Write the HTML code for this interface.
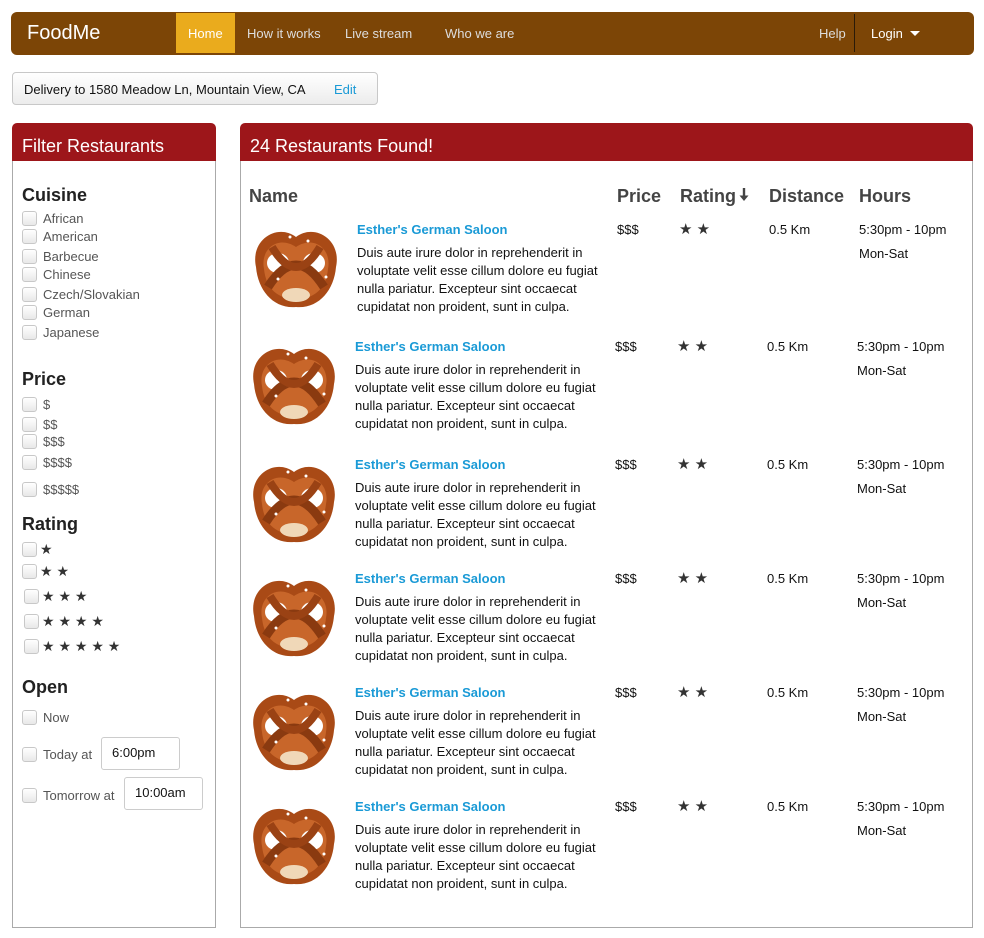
<!DOCTYPE html>
<html><head><meta charset="utf-8"><style>
*{margin:0;padding:0;box-sizing:border-box}
body{width:984px;height:938px;background:#fff;font-family:"Liberation Sans",sans-serif;position:relative;overflow:hidden;color:#222}
.a{position:absolute;white-space:nowrap}
.nav{left:11px;top:12px;width:963px;height:43px;background:#7c4506;border-radius:6px}
.nl{color:#ddd;font-size:13px;top:26px}
.cb{position:absolute;width:15px;height:15px;border:1px solid #c8c8c8;border-radius:3px;background:linear-gradient(#fff,#e8e8e8)}
.ft{font-size:13px;color:#555}
.h3{font-size:18px;font-weight:bold;color:#222}
.ph{background:#9d161a;color:#fff;font-size:18px;padding-left:10px;padding-top:8px;height:38px;line-height:30px;border-radius:5px 5px 0 0}
.panel{border:1px solid #aaa;border-top:none}
.th{font-size:18px;font-weight:bold;color:#444;top:186px}
.nm{color:#1a9ad6;font-weight:bold;font-size:13px}
.d{font-size:13px;line-height:18px;color:#111}
.c{font-size:13px;color:#111}
.in{position:absolute;border:1px solid #ccc;border-radius:3px;font-size:13px;color:#111;padding-left:10px;line-height:30px;background:#fff}
</style></head><body>
<svg width="0" height="0" style="position:absolute"><defs>
<g id="pz">
<path d="M8 48 C2 20 30 4 48 18 C66 4 94 20 88 48 C86 72 70 90 48 88 C26 90 10 72 8 48Z" fill="#a94a16"/>
<path d="M16 50 C12 30 30 16 48 28 C66 16 84 30 80 50 C78 70 66 80 48 80 C30 80 18 70 16 50Z" fill="#c8662a"/>
<ellipse cx="30" cy="44" rx="11" ry="10" fill="#fff"/>
<ellipse cx="66" cy="44" rx="11" ry="10" fill="#fff"/>
<ellipse cx="48" cy="76" rx="14" ry="7" fill="#f0d8b8"/>
<path d="M20 68 Q48 24 76 68" stroke="#8a3a10" stroke-width="9" fill="none"/>
<path d="M24 28 Q48 68 72 28" stroke="#9a4214" stroke-width="8" fill="none"/>
<circle cx="30" cy="60" r="1.5" fill="#fff"/><circle cx="60" cy="22" r="1.5" fill="#fff"/><circle cx="78" cy="58" r="1.5" fill="#fff"/><circle cx="42" cy="18" r="1.5" fill="#fff"/>
</g></defs></svg>

<div class="a nav"></div>
<div class="a" style="left:27px;top:22px;font-size:20px;color:#fff">FoodMe</div>
<div class="a" style="left:176px;top:13px;width:59px;height:40px;background:#eaab1d"></div>
<div class="a nl" style="left:188px;color:#fff">Home</div>
<div class="a nl" style="left:247px">How it works</div>
<div class="a nl" style="left:345px">Live stream</div>
<div class="a nl" style="left:445px">Who we are</div>
<div class="a nl" style="left:819px">Help</div>
<div class="a" style="left:854px;top:14px;width:1px;height:38px;background:#2a1a08"></div>
<div class="a nl" style="left:871px;color:#fff">Login</div>
<div class="a" style="left:910px;top:31px;border-left:5px solid transparent;border-right:5px solid transparent;border-top:5px solid #fff"></div>

<div class="a" style="left:12px;top:72px;width:366px;height:33px;border:1px solid #c8c8c8;border-radius:4px;background:linear-gradient(#fff,#ececec)"></div>
<div class="a" style="left:24px;top:82px;font-size:13px;color:#111">Delivery to 1580 Meadow Ln, Mountain View, CA</div>
<div class="a" style="left:334px;top:82px;font-size:13px;color:#1a9ad6">Edit</div>

<div class="a" style="left:12px;top:123px;width:204px;height:38px"><div class="ph">Filter Restaurants</div></div>
<div class="a panel" style="left:12px;top:161px;width:204px;height:767px"></div>

<div class="a h3" style="left:22px;top:185px">Cuisine</div>
<div class="cb" style="left:22px;top:211px"></div><div class="a ft" style="left:43px;top:211px">African</div>
<div class="cb" style="left:22px;top:229px"></div><div class="a ft" style="left:43px;top:229px">American</div>
<div class="cb" style="left:22px;top:249px"></div><div class="a ft" style="left:43px;top:249px">Barbecue</div>
<div class="cb" style="left:22px;top:267px"></div><div class="a ft" style="left:43px;top:267px">Chinese</div>
<div class="cb" style="left:22px;top:287px"></div><div class="a ft" style="left:43px;top:287px">Czech/Slovakian</div>
<div class="cb" style="left:22px;top:305px"></div><div class="a ft" style="left:43px;top:305px">German</div>
<div class="cb" style="left:22px;top:325px"></div><div class="a ft" style="left:43px;top:325px">Japanese</div>

<div class="a h3" style="left:22px;top:369px">Price</div>
<div class="cb" style="left:22px;top:397px"></div><div class="a ft" style="left:43px;top:397px">$</div>
<div class="cb" style="left:22px;top:417px"></div><div class="a ft" style="left:43px;top:417px">$$</div>
<div class="cb" style="left:22px;top:434px"></div><div class="a ft" style="left:43px;top:434px">$$$</div>
<div class="cb" style="left:22px;top:455px"></div><div class="a ft" style="left:43px;top:455px">$$$$</div>
<div class="cb" style="left:22px;top:482px"></div><div class="a ft" style="left:43px;top:482px">$$$$$</div>

<div class="a h3" style="left:22px;top:514px">Rating</div>
<div class="cb" style="left:22px;top:542px"></div><div class="a" style="left:40px;top:541px;font-size:14px;color:#333">★</div>
<div class="cb" style="left:22px;top:564px"></div><div class="a" style="left:40px;top:563px;font-size:14px;color:#333">★ ★</div>
<div class="cb" style="left:24px;top:589px"></div><div class="a" style="left:42px;top:588px;font-size:14px;color:#333">★ ★ ★</div>
<div class="cb" style="left:24px;top:614px"></div><div class="a" style="left:42px;top:613px;font-size:14px;color:#333">★ ★ ★ ★</div>
<div class="cb" style="left:24px;top:639px"></div><div class="a" style="left:42px;top:638px;font-size:14px;color:#333">★ ★ ★ ★ ★</div>

<div class="a h3" style="left:22px;top:677px">Open</div>
<div class="cb" style="left:22px;top:710px"></div><div class="a ft" style="left:43px;top:710px">Now</div>
<div class="cb" style="left:22px;top:747px"></div><div class="a ft" style="left:43px;top:747px">Today at</div>
<div class="in" style="left:101px;top:737px;width:79px;height:33px">6:00pm</div>
<div class="cb" style="left:22px;top:788px"></div><div class="a ft" style="left:43px;top:788px">Tomorrow at</div>
<div class="in" style="left:124px;top:777px;width:79px;height:33px">10:00am</div>

<div class="a" style="left:240px;top:123px;width:733px;height:38px"><div class="ph">24 Restaurants Found!</div></div>
<div class="a panel" style="left:240px;top:161px;width:733px;height:767px"></div>

<div class="a th" style="left:249px">Name</div>
<div class="a th" style="left:617px">Price</div>
<div class="a th" style="left:680px">Rating</div>
<svg class="a" style="left:739px;top:188px" width="10" height="14"><path d="M5 0V9" stroke="#444" stroke-width="2.4"/><path d="M0.5 7.5L5 13L9.5 7.5Z" fill="#444"/></svg>
<div class="a th" style="left:769px">Distance</div>
<div class="a th" style="left:859px">Hours</div>

<svg class="a" style="left:248px;top:219px" width="97" height="96"><use href="#pz"/></svg>
<div class="a nm" style="left:357px;top:222px">Esther's German Saloon</div>
<div class="a d" style="left:357px;top:244px">Duis aute irure dolor in reprehenderit in<br>voluptate velit esse cillum dolore eu fugiat<br>nulla pariatur. Excepteur sint occaecat<br>cupidatat non proident, sunt in culpa.</div>
<div class="a c" style="left:617px;top:222px">$$$</div><div class="a c" style="left:679px;top:220px;font-size:15px;color:#333">★ ★</div><div class="a c" style="left:769px;top:222px">0.5 Km</div><div class="a c" style="left:859px;top:222px">5:30pm - 10pm</div><div class="a c" style="left:859px;top:246px">Mon-Sat</div>

<svg class="a" style="left:246px;top:336px" width="97" height="96"><use href="#pz"/></svg>
<div class="a nm" style="left:355px;top:339px">Esther's German Saloon</div>
<div class="a d" style="left:355px;top:361px">Duis aute irure dolor in reprehenderit in<br>voluptate velit esse cillum dolore eu fugiat<br>nulla pariatur. Excepteur sint occaecat<br>cupidatat non proident, sunt in culpa.</div>
<div class="a c" style="left:615px;top:339px">$$$</div><div class="a c" style="left:677px;top:337px;font-size:15px;color:#333">★ ★</div><div class="a c" style="left:767px;top:339px">0.5 Km</div><div class="a c" style="left:857px;top:339px">5:30pm - 10pm</div><div class="a c" style="left:857px;top:363px">Mon-Sat</div>

<svg class="a" style="left:246px;top:454px" width="97" height="96"><use href="#pz"/></svg>
<div class="a nm" style="left:355px;top:457px">Esther's German Saloon</div>
<div class="a d" style="left:355px;top:479px">Duis aute irure dolor in reprehenderit in<br>voluptate velit esse cillum dolore eu fugiat<br>nulla pariatur. Excepteur sint occaecat<br>cupidatat non proident, sunt in culpa.</div>
<div class="a c" style="left:615px;top:457px">$$$</div><div class="a c" style="left:677px;top:455px;font-size:15px;color:#333">★ ★</div><div class="a c" style="left:767px;top:457px">0.5 Km</div><div class="a c" style="left:857px;top:457px">5:30pm - 10pm</div><div class="a c" style="left:857px;top:481px">Mon-Sat</div>

<svg class="a" style="left:246px;top:568px" width="97" height="96"><use href="#pz"/></svg>
<div class="a nm" style="left:355px;top:571px">Esther's German Saloon</div>
<div class="a d" style="left:355px;top:593px">Duis aute irure dolor in reprehenderit in<br>voluptate velit esse cillum dolore eu fugiat<br>nulla pariatur. Excepteur sint occaecat<br>cupidatat non proident, sunt in culpa.</div>
<div class="a c" style="left:615px;top:571px">$$$</div><div class="a c" style="left:677px;top:569px;font-size:15px;color:#333">★ ★</div><div class="a c" style="left:767px;top:571px">0.5 Km</div><div class="a c" style="left:857px;top:571px">5:30pm - 10pm</div><div class="a c" style="left:857px;top:595px">Mon-Sat</div>

<svg class="a" style="left:246px;top:682px" width="97" height="96"><use href="#pz"/></svg>
<div class="a nm" style="left:355px;top:685px">Esther's German Saloon</div>
<div class="a d" style="left:355px;top:707px">Duis aute irure dolor in reprehenderit in<br>voluptate velit esse cillum dolore eu fugiat<br>nulla pariatur. Excepteur sint occaecat<br>cupidatat non proident, sunt in culpa.</div>
<div class="a c" style="left:615px;top:685px">$$$</div><div class="a c" style="left:677px;top:683px;font-size:15px;color:#333">★ ★</div><div class="a c" style="left:767px;top:685px">0.5 Km</div><div class="a c" style="left:857px;top:685px">5:30pm - 10pm</div><div class="a c" style="left:857px;top:709px">Mon-Sat</div>

<svg class="a" style="left:246px;top:796px" width="97" height="96"><use href="#pz"/></svg>
<div class="a nm" style="left:355px;top:799px">Esther's German Saloon</div>
<div class="a d" style="left:355px;top:821px">Duis aute irure dolor in reprehenderit in<br>voluptate velit esse cillum dolore eu fugiat<br>nulla pariatur. Excepteur sint occaecat<br>cupidatat non proident, sunt in culpa.</div>
<div class="a c" style="left:615px;top:799px">$$$</div><div class="a c" style="left:677px;top:797px;font-size:15px;color:#333">★ ★</div><div class="a c" style="left:767px;top:799px">0.5 Km</div><div class="a c" style="left:857px;top:799px">5:30pm - 10pm</div><div class="a c" style="left:857px;top:823px">Mon-Sat</div>
</body></html>
